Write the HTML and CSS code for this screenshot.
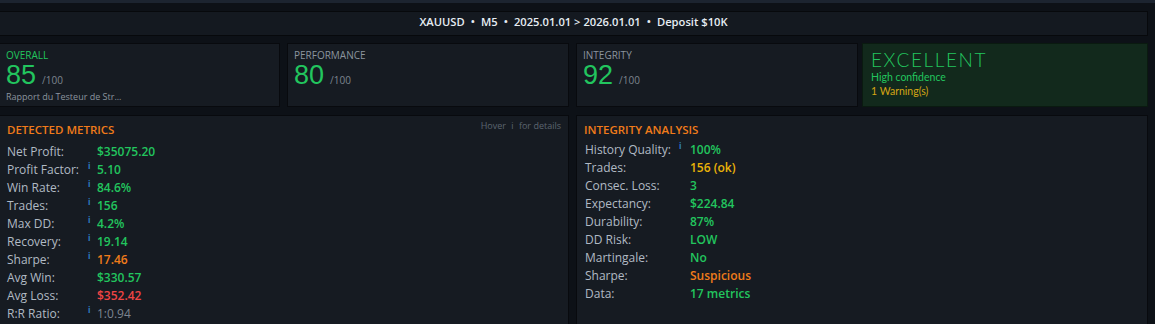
FILE: index.html
```html
<!DOCTYPE html>
<html lang="en">
<head>
    <meta charset="UTF-8">
    <title>Strategy Report</title>
    <link rel="stylesheet" href="styles.css">
</head>
<body>
    <div class="topbar"></div>

    <div class="page">
        <div class="header">
            <span>XAUUSD</span><span class="dot">•</span><span>M5</span><span class="dot">•</span><span>2025.01.01 &gt; 2026.01.01</span><span class="dot">•</span><span>Deposit $10K</span>
        </div>

        <div class="scores">
            <div class="card">
                <div class="card-label green">OVERALL</div>
                <div class="score"><span class="big">85</span><span class="max">/100</span></div>
                <div class="sub">Rapport du Testeur de Str...</div>
            </div>
            <div class="card">
                <div class="card-label">PERFORMANCE</div>
                <div class="score"><span class="big">80</span><span class="max">/100</span></div>
            </div>
            <div class="card">
                <div class="card-label">INTEGRITY</div>
                <div class="score"><span class="big">92</span><span class="max">/100</span></div>
            </div>
            <div class="card verdict">
                <div class="verdict-title">EXCELLENT</div>
                <div class="verdict-sub">High confidence</div>
                <div class="verdict-warn">1 Warning(s)</div>
            </div>
        </div>

        <div class="panels">
            <div class="panel">
                <div class="panel-head">
                    <span class="panel-title">DETECTED METRICS</span>
                    <span class="hint">Hover <span class="hint-i">i</span> for details</span>
                </div>
                <div class="rows metrics">
                    <span class="lbl">Net Profit:</span><span class="ico"></span><span class="val green">$35075.20</span>
                    <span class="lbl">Profit Factor:</span><span class="ico">i</span><span class="val green">5.10</span>
                    <span class="lbl">Win Rate:</span><span class="ico">i</span><span class="val green">84.6%</span>
                    <span class="lbl">Trades:</span><span class="ico">i</span><span class="val green">156</span>
                    <span class="lbl">Max DD:</span><span class="ico">i</span><span class="val green">4.2%</span>
                    <span class="lbl">Recovery:</span><span class="ico">i</span><span class="val green">19.14</span>
                    <span class="lbl">Sharpe:</span><span class="ico">i</span><span class="val orange">17.46</span>
                    <span class="lbl">Avg Win:</span><span class="ico"></span><span class="val green">$330.57</span>
                    <span class="lbl">Avg Loss:</span><span class="ico"></span><span class="val red">$352.42</span>
                    <span class="lbl">R:R Ratio:</span><span class="ico">i</span><span class="val grey">1:0.94</span>
                </div>
            </div>
            <div class="panel">
                <div class="panel-head">
                    <span class="panel-title">INTEGRITY ANALYSIS</span>
                </div>
                <div class="rows integrity">
                    <span class="lbl">History Quality:</span><span class="ico">i</span><span class="val green">100%</span>
                    <span class="lbl">Trades:</span><span class="ico"></span><span class="val yellow">156 (ok)</span>
                    <span class="lbl">Consec. Loss:</span><span class="ico"></span><span class="val green">3</span>
                    <span class="lbl">Expectancy:</span><span class="ico"></span><span class="val green">$224.84</span>
                    <span class="lbl">Durability:</span><span class="ico"></span><span class="val green">87%</span>
                    <span class="lbl">DD Risk:</span><span class="ico"></span><span class="val green">LOW</span>
                    <span class="lbl">Martingale:</span><span class="ico"></span><span class="val green">No</span>
                    <span class="lbl">Sharpe:</span><span class="ico"></span><span class="val orange">Suspicious</span>
                    <span class="lbl">Data:</span><span class="ico"></span><span class="val green">17 metrics</span>
                </div>
            </div>
        </div>
    </div>
</body>
</html>
```

FILE: styles.css
```css
body {
    margin: 0;
    background-color: #0d1117;
    font-family: "Open Sans", "Noto Sans", sans-serif;
    color: #c9d1d9;
    overflow: hidden;
}
.topbar {
    height: 3px;
    background-color: #1c2430;
}
.page {
    margin: 8px 7px 0 -1px;
}
.header {
    display: flex;
    justify-content: center;
    height: 23px;
    line-height: 19px;
    background-color: #141920;
    border: 1px solid #07090c;
    font-size: 11.2px;
    font-weight: 600;
    color: #e6edf3;
}
.dot {
    margin: 0 6px;
}
.scores {
    display: grid;
    grid-template-columns: 281px 282px 282px 1fr;
    gap: 7px;
    margin-top: 7px;
}
.card {
    height: 62px;
    background-color: #161b22;
    border: 1px solid #080a0e;
    padding: 0 6px;
}
.card-label {
    margin-top: 5px;
    font-size: 10px;
    color: #8b949e;
    height: 12px;
    line-height: 12px;
}
.green { color: #22c55e; }
.orange { color: #f07b1a; }
.red { color: #ef4444; }
.yellow { color: #eab308; }
.grey { color: #7d8590; }
.score {
    display: flex;
    align-items: baseline;
    height: 28px;
    line-height: 28px;
}
.big {
    font-family: "Liberation Sans", Arial, sans-serif;
    font-size: 27px;
    color: #22c55e;
}
.max {
    margin-left: 6px;
    font-size: 10px;
    color: #7d8590;
}
.sub {
    margin-top: 2px;
    font-size: 9px;
    line-height: 12px;
    color: #8b949e;
}
.verdict {
    margin-left: -3px;
    background-color: #12291c;
    border-color: #0a1a10;
    padding-left: 8px;
    font-family: Lato, "Open Sans", sans-serif;
}
.verdict-title {
    margin-top: 6px;
    font-size: 19px;
    font-weight: 300;
    letter-spacing: 1.6px;
    line-height: 19px;
    color: #22c55e;
}
.verdict-sub {
    margin-top: 2px;
    font-size: 10.5px;
    line-height: 12px;
    color: #22c55e;
}
.verdict-warn {
    margin-top: 2px;
    font-size: 10.5px;
    line-height: 12px;
    color: #d4a514;
}
.panels {
    display: grid;
    grid-template-columns: 570px 1fr;
    gap: 7px;
    margin-top: 8px;
}
.panel {
    height: 220px;
    background-color: #161b22;
    border: 1px solid #080a0e;
    padding: 0 7px;
}
.panel-head {
    display: flex;
    justify-content: space-between;
    align-items: flex-start;
    height: 24px;
}
.panel-title {
    margin-top: 6px;
    font-size: 11.5px;
    font-weight: 600;
    color: #f07b1a;
}
.hint {
    margin-top: 3px;
    font-size: 9px;
    color: #5c6570;
}
.hint-i {
    margin: 0 3px;
}
.rows {
    display: grid;
    align-items: center;
    grid-auto-rows: 18px;
    font-size: 12px;
}
.metrics {
    grid-template-columns: 81px 9px 1fr;
    margin-top: 2px;
}
.integrity {
    grid-template-columns: 94px 11px 1fr;
    margin-left: 1px;
}
.lbl {
    color: #b1bac4;
}
.ico {
    font-size: 8px;
    font-weight: 700;
    color: #2f81c7;
    align-self: start;
    line-height: 12px;
}
.val {
    font-weight: 600;
}
.val.grey {
    font-weight: 400;
}
```
